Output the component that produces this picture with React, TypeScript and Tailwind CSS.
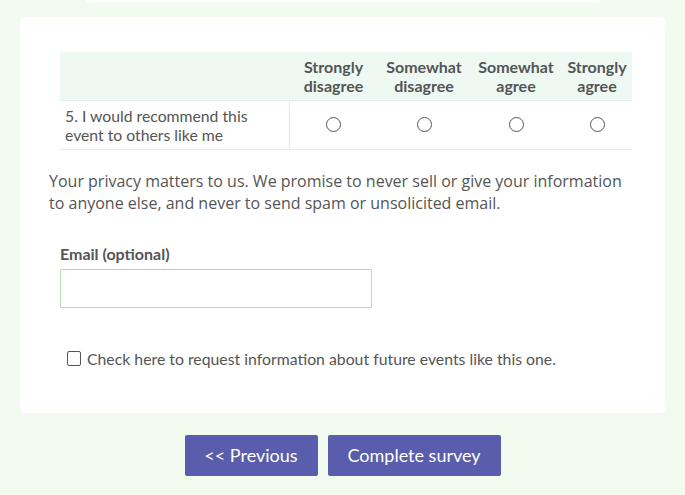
import React, { useState } from "react";

const options = ["Strongly disagree", "Somewhat disagree", "Somewhat agree", "Strongly agree"];
const colWidths = ["w-[89px]", "w-[92px]", "w-[92px]", "w-[70px]"];

const App = () => {
    const [answer, setAnswer] = useState<number | null>(null);
    const [email, setEmail] = useState("");
    const [notify, setNotify] = useState(false);

    return (
        <div className="min-h-[495px] bg-[#f1fbef] font-['Lato',sans-serif] text-[#555]">
            {/* bottom edge of previous card */}
            <div className="ml-[86px] h-[2px] w-[514px] rounded-b bg-white" />

            <div className="mx-5 mt-[15px] h-[396px] rounded bg-white px-[29px] pt-[35px]">
                <table className="ml-[11px] w-[572px] border-collapse text-[16px] leading-[19px]">
                    <thead>
                        <tr className="h-[48px] border-b border-[#dcf1e6] bg-[#eef9f3]">
                            <th className="w-[229px]" />
                            {options.map((o, i) => (
                                <th key={o} className={`${colWidths[i]} text-center font-bold text-[#555]`}>
                                    {o.split(" ")[0]}
                                    <br />
                                    {o.split(" ")[1]}
                                </th>
                            ))}
                        </tr>
                    </thead>
                    <tbody>
                        <tr className="h-[49px] border-b border-[#dcf1e6]">
                            <td className="border-r border-[#dcf1e6] pl-[5px] pr-2 text-left text-[15.75px]">
                                5. I would recommend this
                                <br />
                                event to others like me
                            </td>
                            {options.map((o, i) => (
                                <td key={o} className="text-center">
                                    <button
                                        aria-label={o}
                                        onClick={() => setAnswer(i)}
                                        className="mx-auto flex h-[15px] w-[15px] items-center justify-center rounded-full border border-[#555]"
                                    >
                                        {answer === i && <span className="h-[7px] w-[7px] rounded-full bg-[#555]" />}
                                    </button>
                                </td>
                            ))}
                        </tr>
                    </tbody>
                </table>

                <p className="mt-[20px] font-['Open_Sans',sans-serif] text-[16px] leading-[22px] text-[#555]">
                    Your privacy matters to us. We promise to never sell or give your information
                    <br />
                    to anyone else, and never to send spam or unsolicited email.
                </p>

                <div className="ml-[11px] mt-[30px]">
                    <label className="block text-[16px] font-bold leading-[20px]">Email (optional)</label>
                    <input
                        value={email}
                        onChange={(e) => setEmail(e.target.value)}
                        className="mt-[5px] h-[39px] w-[312px] rounded-[2px] border border-[#b8d9b2] px-2 outline-none"
                    />
                </div>

                <label className="ml-[18px] mt-[41px] flex items-center gap-[6px] text-[15.8px] leading-[20px]">
                    <input
                        type="checkbox"
                        checked={notify}
                        onChange={(e) => setNotify(e.target.checked)}
                        className="h-[15px] w-[14px] appearance-none rounded-[2px] border border-[#555] checked:bg-[#555]"
                    />
                    Check here to request information about future events like this one.
                </label>
            </div>

            <div className="mt-[22px] flex justify-center gap-[10px]">
                <button className="h-[41px] w-[133px] rounded-[2px] bg-[#5a5dab] text-[18px] text-white">
                    &lt;&lt; Previous
                </button>
                <button className="h-[41px] w-[173px] rounded-[2px] bg-[#5a5dab] text-[18px] text-white">
                    Complete survey
                </button>
            </div>
        </div>
    );
};

export default App;
